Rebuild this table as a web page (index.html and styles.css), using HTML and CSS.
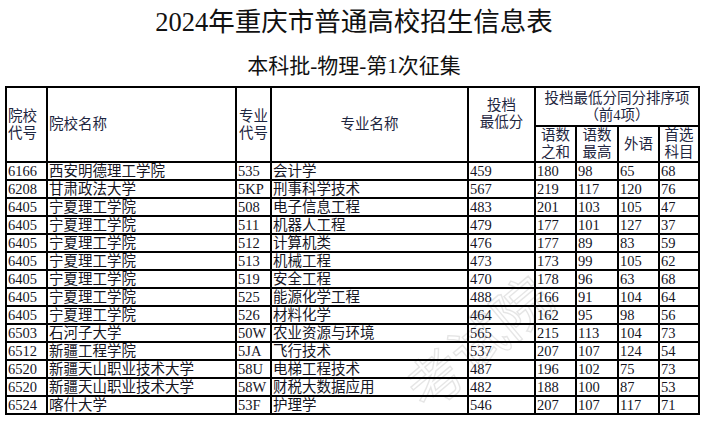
FILE: index.html
```html
<!DOCTYPE html>
<html lang="zh-CN">
<head>
<meta charset="utf-8">
<title>2024年重庆市普通高校招生信息表</title>
<link rel="stylesheet" href="styles.css">
</head>
<body>
<div class="page">
  <h1 class="title">2024年重庆市普通高校招生信息表</h1>
  <h2 class="subtitle">本科批-物理-第1次征集</h2>
  <table class="sheet">
    <colgroup>
      <col class="c-code"><col class="c-school"><col class="c-mcode"><col class="c-major"><col class="c-score">
      <col class="c-s1"><col class="c-s2"><col class="c-s3"><col class="c-s4">
    </colgroup>
    <thead>
      <tr class="h1">
        <th rowspan="2" class="left">院校<br>代号</th>
        <th rowspan="2" class="left">院校名称</th>
        <th rowspan="2">专业<br>代号</th>
        <th rowspan="2">专业名称</th>
        <th rowspan="2" class="top">投档<br>最低分</th>
        <th colspan="4">投档最低分同分排序项<br>（前4项）</th>
      </tr>
      <tr class="h2">
        <th>语数<br>之和</th>
        <th>语数<br>最高</th>
        <th>外语</th>
        <th>首选<br>科目</th>
      </tr>
    </thead>
    <tbody>
      <tr><td>6166</td><td>西安明德理工学院</td><td>535</td><td>会计学</td><td>459</td><td>180</td><td>98</td><td>65</td><td>68</td></tr>
      <tr><td>6208</td><td>甘肃政法大学</td><td>5KP</td><td>刑事科学技术</td><td>567</td><td>219</td><td>117</td><td>120</td><td>76</td></tr>
      <tr><td>6405</td><td>宁夏理工学院</td><td>508</td><td>电子信息工程</td><td>483</td><td>201</td><td>103</td><td>105</td><td>47</td></tr>
      <tr><td>6405</td><td>宁夏理工学院</td><td>511</td><td>机器人工程</td><td>479</td><td>177</td><td>101</td><td>127</td><td>37</td></tr>
      <tr><td>6405</td><td>宁夏理工学院</td><td>512</td><td>计算机类</td><td>476</td><td>177</td><td>89</td><td>83</td><td>59</td></tr>
      <tr><td>6405</td><td>宁夏理工学院</td><td>513</td><td>机械工程</td><td>473</td><td>173</td><td>99</td><td>105</td><td>62</td></tr>
      <tr><td>6405</td><td>宁夏理工学院</td><td>519</td><td>安全工程</td><td>470</td><td>178</td><td>96</td><td>63</td><td>68</td></tr>
      <tr><td>6405</td><td>宁夏理工学院</td><td>525</td><td>能源化学工程</td><td>488</td><td>166</td><td>91</td><td>104</td><td>64</td></tr>
      <tr><td>6405</td><td>宁夏理工学院</td><td>526</td><td>材料化学</td><td>464</td><td>162</td><td>95</td><td>98</td><td>56</td></tr>
      <tr><td>6503</td><td>石河子大学</td><td>50W</td><td>农业资源与环境</td><td>565</td><td>215</td><td>113</td><td>104</td><td>73</td></tr>
      <tr><td>6512</td><td>新疆工程学院</td><td>5JA</td><td>飞行技术</td><td>537</td><td>207</td><td>107</td><td>124</td><td>54</td></tr>
      <tr><td>6520</td><td>新疆天山职业技术大学</td><td>58U</td><td>电梯工程技术</td><td>487</td><td>196</td><td>102</td><td>75</td><td>73</td></tr>
      <tr><td>6520</td><td>新疆天山职业技术大学</td><td>58W</td><td>财税大数据应用</td><td>482</td><td>188</td><td>100</td><td>87</td><td>53</td></tr>
      <tr><td>6524</td><td>喀什大学</td><td>53F</td><td>护理学</td><td>546</td><td>207</td><td>107</td><td>117</td><td>71</td></tr>
    </tbody>
  </table>
  <div class="watermark" aria-hidden="true">考试院</div>
</div>
</body>
</html>
```
FILE: styles.css
```css
html, body {
  margin: 0;
  padding: 0;
  background: #fff;
}
body {
  font-family: "Liberation Serif", "Noto Sans CJK SC", serif;
  color: #111;
}
.page {
  position: relative;
  width: 708px;
  height: 426px;
  overflow: hidden;
}
.title {
  margin: 0;
  padding-top: 8px;
  font-size: 26.5px;
  line-height: 28px;
  font-weight: 400;
  text-align: center;
  color: #111;
}
.subtitle {
  margin: 18px 0 0;
  font-size: 21px;
  line-height: 24px;
  font-weight: 400;
  text-align: center;
  color: #111;
}
.sheet {
  margin: 8px 0 0 5px;
  width: 695px;
  table-layout: fixed;
  border-collapse: collapse;
  font-size: 14.5px;
  position: relative;
  z-index: 1;
}
.c-code { width: 41px; }
.c-school { width: 189px; }
.c-mcode { width: 35px; }
.c-major { width: 197px; }
.c-score { width: 67px; }
.c-s1 { width: 41px; }
.c-s2 { width: 42px; }
.c-s3 { width: 41px; }
.c-s4 { width: 40px; }
.sheet th, .sheet td {
  border: 2px solid #000;
  padding: 0 1px;
  white-space: nowrap;
  overflow: hidden;
}
.sheet th {
  font-weight: 400;
  line-height: 17px;
  text-align: center;
  color: #1e2640;
}
.sheet th.left {
  text-align: left;
}
.sheet th.top {
  vertical-align: top;
  padding-top: 9px;
}
.sheet tr.h1 th { height: 37px; }
.sheet tr.h2 th { height: 34px; }
.sheet td {
  height: 16px;
  line-height: 16px;
  text-align: left;
  color: #15151f;
}
.watermark {
  position: absolute;
  left: 430px;
  top: 360px;
  font-family: "Noto Sans CJK SC", sans-serif;
  font-size: 56px;
  line-height: 1;
  color: transparent;
  -webkit-text-stroke: 1.5px rgba(0, 0, 0, 0.1);
  transform: rotate(-40deg);
  transform-origin: left bottom;
  z-index: 0;
  pointer-events: none;
}
```
